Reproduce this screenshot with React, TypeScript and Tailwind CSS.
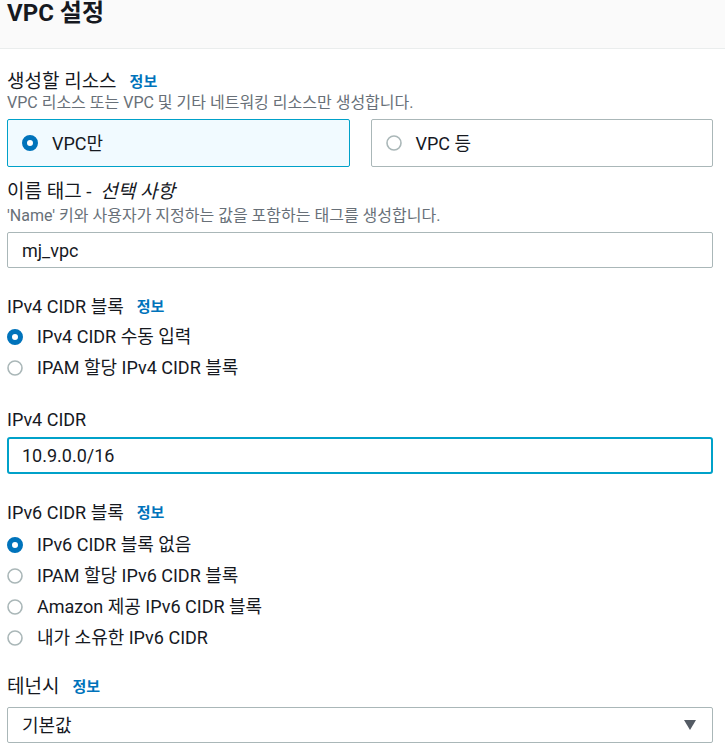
import React from "react";

const FONT = { fontFamily: 'Roboto, "Noto Sans CJK KR", sans-serif' };

function Radio({ checked }: { checked: boolean }) {
  return checked ? (
    <svg width="16" height="16" viewBox="0 0 16 16" className="shrink-0">
      <circle cx="8" cy="8" r="5.5" fill="#ffffff" stroke="#0073bb" strokeWidth="5" />
    </svg>
  ) : (
    <svg width="16" height="16" viewBox="0 0 16 16" className="shrink-0">
      <circle cx="8" cy="8" r="7" fill="#ffffff" stroke="#aab7b8" strokeWidth="1.6" />
    </svg>
  );
}

function Info() {
  return <span className="ml-[13px] text-[15px] font-bold text-[#0073bb]">정보</span>;
}

function RadioRow({ checked, label }: { checked: boolean; label: string }) {
  return (
    <div className="flex h-[31px] items-center">
      <div className="w-[30px]">
        <Radio checked={checked} />
      </div>
      <span className="text-[18px] text-[#16191f]">{label}</span>
    </div>
  );
}

export default function App() {
  return (
    <div className="w-[725px] h-[749px] overflow-hidden bg-white" style={FONT}>
      <div className="h-[49px] border-b border-[#eaeded] bg-[#fafafa] px-[7px]">
        <div className="text-[24px] font-bold leading-[27px] text-[#16191f]">VPC 설정</div>
      </div>
      <div className="pl-[7px] pr-[12px]">
        <div className="mt-[22px] flex items-center leading-[22px] text-[19px] text-[#16191f]">
          생성할 리소스<Info />
        </div>
        <div className="mt-[1px] text-[16px] leading-[18px] text-[#687078]">
          VPC 리소스 또는 VPC 및 기타 네트워킹 리소스만 생성합니다.
        </div>
        <div className="mt-[7px] grid grid-cols-2 gap-[21px]">
          <div className="flex h-[48px] items-center rounded-[2px] border border-[#00a1c9] bg-[#f1faff] pl-[14px]">
            <Radio checked={true} />
            <span className="ml-[14px] text-[18px] text-[#16191f]">VPC만</span>
          </div>
          <div className="flex h-[48px] items-center rounded-[2px] border border-[#aab7b8] bg-white pl-[14px]">
            <Radio checked={false} />
            <span className="ml-[14px] text-[18px] text-[#16191f]">VPC 등</span>
          </div>
        </div>
        <div className="mt-[14px] leading-[22px] text-[19px] text-[#16191f]">
          이름 태그 - <i className="ml-[4px]">선택 사항</i>
        </div>
        <div className="mt-[4px] text-[16px] leading-[18px] text-[#687078]">
          'Name' 키와 사용자가 지정하는 값을 포함하는 태그를 생성합니다.
        </div>
        <div className="mt-[7px] flex h-[36px] items-center rounded-[2px] border border-[#aab7b8] px-[14px] text-[18px] text-[#16191f]">
          mj_vpc
        </div>
        <div className="mt-[28px] flex items-center leading-[22px] text-[18px] text-[#16191f]">
          IPv4 CIDR 블록<Info />
        </div>
        <div className="mt-[3px]">
          <RadioRow checked={true} label="IPv4 CIDR 수동 입력" />
          <RadioRow checked={false} label="IPAM 할당 IPv4 CIDR 블록" />
        </div>
        <div className="mt-[26px] leading-[22px] text-[18px] text-[#16191f]">IPv4 CIDR</div>
        <div className="mt-[6px] flex h-[37px] items-center rounded-[3px] border-2 border-[#00a1c9] px-[13px] text-[18px] text-[#16191f]">
          10.9.0.0/16
        </div>
        <div className="mt-[28px] flex items-center leading-[22px] text-[18px] text-[#16191f]">
          IPv6 CIDR 블록<Info />
        </div>
        <div className="mt-[5px]">
          <RadioRow checked={true} label="IPv6 CIDR 블록 없음" />
          <RadioRow checked={false} label="IPAM 할당 IPv6 CIDR 블록" />
          <RadioRow checked={false} label="Amazon 제공 IPv6 CIDR 블록" />
          <RadioRow checked={false} label="내가 소유한 IPv6 CIDR" />
        </div>
        <div className="mt-[23px] flex items-center leading-[22px] text-[19px] text-[#16191f]">
          테넌시<Info />
        </div>
        <div className="mt-[9px] flex h-[36px] items-center justify-between rounded-[2px] border border-[#aab7b8] pl-[14px] pr-[16px] text-[18px] text-[#16191f]">
          <span>기본값</span>
          <svg width="12" height="10" viewBox="0 0 12 10">
            <path d="M0 0 H12 L6 10 Z" fill="#545b64" />
          </svg>
        </div>
      </div>
    </div>
  );
}
